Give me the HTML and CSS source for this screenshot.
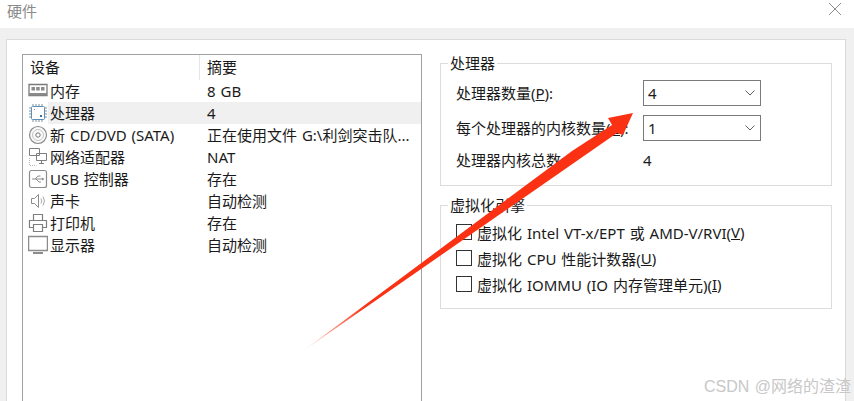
FILE: index.html
```html
<!DOCTYPE html>
<html lang="zh-CN">
<head>
  <meta charset="UTF-8" />
  <title>硬件</title>
  <link rel="stylesheet" href="styles.css">
</head>
<body>

  <header class="titlebar">
    <span class="title">硬件</span>
    <svg class="close" width="14" height="14" viewBox="0 0 14 14"><path d="M1 1L13 13M13 1L1 13" stroke="#8c8c8c" fill="none"/></svg>
  </header>

  <div class="body">
    <div class="panel">

      <div class="list">
        <div class="list-head">
          <div class="col-a">设备</div>
          <div class="col-b">摘要</div>
        </div>

        <div class="row">
          <svg class="ico" viewBox="0 0 20 20"><path d="M1 3.500h18v11H1z" fill="#fff" stroke="#7a7a7a" stroke-width="1.300"/><path d="M1 12h18v2.500H1z" fill="#8a8a8a"/><path d="M3.500 6h3.500v3.500H3.500zM8.200 6h3.500v3.500H8.200zM13 6h3.500v3.500H13z" fill="#8a8a8a"/></svg>
          <div class="name">内存</div>
          <div class="val">8 GB</div>
        </div>

        <div class="row selected">
          <svg class="ico" viewBox="0 0 20 20"><rect x="3.500" y="3.500" width="13" height="13" rx="1" fill="#fff" stroke="#5b8fb5"/><path d="M5 1v2M8 1v2M11 1v2M14 1v2M5 17v2M8 17v2M11 17v2M14 17v2M1 5h2M1 8h2M1 11h2M1 14h2M17 5h2M17 8h2M17 11h2M17 14h2" stroke="#7f8f9c"/><rect x="12" y="12" width="2" height="2" fill="#3f6f96"/><rect x="6" y="6" width="1" height="1" fill="#7f8f9c"/></svg>
          <div class="name">处理器</div>
          <div class="val">4</div>
        </div>

        <div class="row">
          <svg class="ico" viewBox="0 0 20 20"><circle cx="10" cy="10" r="8.500" fill="#fafafa" stroke="#8a8a8a" stroke-width="1.200"/><circle cx="10" cy="10" r="5.500" fill="none" stroke="#c4c4c4"/><circle cx="10" cy="10" r="2.200" fill="#fff" stroke="#777"/></svg>
          <div class="name">新 CD/DVD (SATA)</div>
          <div class="val">正在使用文件 G:\利剑突击队...</div>
        </div>

        <div class="row">
          <svg class="ico" viewBox="0 0 20 20"><path d="M1.500 1.500h10v7h-10zM8.500 6.500h10v7h-10z" fill="#fff" stroke="#7f7f7f"/><path d="M11 16.500h5M13.500 13.500v3" stroke="#7f7f7f"/><path d="M1.500 11v7.500h7" fill="none" stroke="#b5b5b5" stroke-dasharray="1 1"/></svg>
          <div class="name">网络适配器</div>
          <div class="val">NAT</div>
        </div>

        <div class="row">
          <svg class="ico" viewBox="0 0 20 20"><rect x="1.500" y="1.500" width="17" height="17" rx="2" fill="#fff" stroke="#8c8c8c" stroke-width="1.200"/><path d="M4 10h10M7 10l3-3h2.500M8 10l3 3h2" fill="none" stroke="#8c8c8c"/><path d="M14 8.500l2.500 1.500-2.500 1.500z" fill="#8c8c8c"/></svg>
          <div class="name">USB 控制器</div>
          <div class="val">存在</div>
        </div>

        <div class="row">
          <svg class="ico" viewBox="0 0 20 20"><path d="M3.500 7.500h3l4-4v13l-4-4h-3z" fill="#fff" stroke="#8c8c8c"/><path d="M13 7.500q1.500 2.500 0 5M15 5.500q3 4.500 0 9" fill="none" stroke="#a8a8a8"/></svg>
          <div class="name">声卡</div>
          <div class="val">自动检测</div>
        </div>

        <div class="row">
          <svg class="ico" viewBox="0 0 20 20"><path d="M5.500 7V1.500h9V7M5.500 14.500h-4v-7h17v7h-4" fill="#fff" stroke="#7f7f7f" stroke-width="1.200"/><path d="M5.500 11.500h9v7h-9z" fill="#fff" stroke="#7f7f7f" stroke-width="1.200"/></svg>
          <div class="name">打印机</div>
          <div class="val">存在</div>
        </div>

        <div class="row">
          <svg class="ico" viewBox="0 0 20 20"><rect x="0.500" y="1.500" width="19" height="14" fill="#fff" stroke="#8c8c8c" stroke-width="1.500"/><path d="M5 18h10" stroke="#8c8c8c" stroke-width="2"/></svg>
          <div class="name">显示器</div>
          <div class="val">自动检测</div>
        </div>
      </div>

      <div class="side">
        <fieldset class="group group-cpu">
          <legend>处理器</legend>
          <div class="form-row">
            <label>处理器数量(<u>P</u>):</label>
            <div class="combo"><span>4</span><svg width="10" height="6" viewBox="0 0 10 6"><path d="M0.500 0.500L5 5L9.500 0.500" fill="none" stroke="#606060"/></svg></div>
          </div>
          <div class="form-row">
            <label>每个处理器的内核数量(<u>C</u>):</label>
            <div class="combo"><span>1</span><svg width="10" height="6" viewBox="0 0 10 6"><path d="M0.500 0.500L5 5L9.500 0.500" fill="none" stroke="#606060"/></svg></div>
          </div>
          <div class="form-row total">
            <label>处理器内核总数:</label>
            <div class="total-val">4</div>
          </div>
        </fieldset>

        <fieldset class="group group-virt">
          <legend>虚拟化引擎</legend>
          <div class="check"><span class="box"></span>虚拟化 Intel VT-x/EPT 或 AMD-V/RVI(<u>V</u>)</div>
          <div class="check"><span class="box"></span>虚拟化 CPU 性能计数器(<u>U</u>)</div>
          <div class="check"><span class="box"></span>虚拟化 IOMMU (IO 内存管理单元)(<u>I</u>)</div>
        </fieldset>
      </div>

    </div>
  </div>

  <!-- red annotation arrow drawn over the dialog -->
  <svg class="arrow" width="854" height="401" viewBox="0 0 854 401">
    <defs>
      <linearGradient id="fade" gradientUnits="userSpaceOnUse" x1="303" y1="351" x2="365" y2="306">
        <stop offset="0" stop-color="#fa3213" stop-opacity="0.1"/>
        <stop offset="1" stop-color="#fa3213"/>
      </linearGradient>
    </defs>
    <polygon points="303,351 572,151 612,125 608,118 633,113 623,135 617,133" fill="url(#fade)"/>
  </svg>

  <div class="watermark">CSDN @网络的渣渣</div>

</body>
</html>
```

FILE: styles.css
```css
* {
  box-sizing: border-box;
}

html, body {
  height: 100%;
}

body {
  margin: 0;
  width: 854px;
  height: 401px;
  overflow: hidden;
  position: relative;
  background: #fff;
  color: #1a1a1a;
  font-family: "Noto Sans", "Noto Sans CJK SC", sans-serif;
  font-size: 15px;
  word-spacing: 1px;
}

.titlebar {
  height: 28px;
  display: flex;
  justify-content: space-between;
  align-items: center;
  padding: 0 12px 8px 7px;
  background: #fff;
}

.title {
  color: #8a8a8a;
  font-size: 15px;
}

.close {
  margin-top: -2px;
}

.body {
  height: 373px;
  background: #f0f0f0;
  padding: 11px 8px 0 6px;
}

.panel {
  height: 362px;
  display: flex;
  gap: 18px;
  padding: 14px 0 0 15px;
  background: #fff;
  border: 1px solid #dadada;
  border-bottom: none;
  overflow: hidden;
}

/* device list */

.list {
  width: 400px;
  height: 360px;
  flex: none;
  border: 1px solid #a0a0a0;
  border-bottom: none;
}

.list-head {
  height: 25px;
  display: flex;
  align-items: center;
}

.col-a {
  width: 177px;
  padding-left: 7px;
  height: 25px;
  line-height: 25px;
  border-right: 1px solid #e5e5e5;
}

.col-b {
  padding-left: 7px;
  height: 25px;
  line-height: 25px;
}

.row {
  height: 22px;
  display: flex;
  align-items: center;
  padding-left: 5px;
  line-height: 22px;
  white-space: nowrap;
}

.row.selected {
  background: linear-gradient(to right, #fff 25px, #f0f0f0 25px);
}

.ico {
  width: 20px;
  height: 20px;
  flex: none;
  margin-right: 2px;
}

.name {
  width: 157px;
  flex: none;
}

/* right side groups */

.side {
  width: 392px;
  flex: none;
  display: flex;
  flex-direction: column;
  gap: 9px;
  margin-top: -1px;
}

.group {
  margin: 0;
  padding: 0 0 0 15px;
  border: 1px solid #dcdcdc;
}

.group legend {
  padding: 0 2px;
  margin-left: -8px;
  line-height: 20px;
}

.group-cpu {
  height: 133px;
}

.group-virt {
  height: 114px;
}

.form-row {
  display: flex;
  align-items: center;
  height: 25px;
  margin-top: 10px;
  white-space: nowrap;
}

.form-row:first-of-type {
  margin-top: 7px;
}

.form-row label {
  width: 187px;
  flex: none;
}

.combo {
  width: 118px;
  height: 26px;
  display: flex;
  align-items: center;
  justify-content: space-between;
  padding: 0 5px 0 4px;
  border: 1px solid #7a7a7a;
  background: #fff;
}

.form-row.total {
  margin-top: 7px;
}

.check {
  display: flex;
  align-items: center;
  height: 26px;
  white-space: pre;
}

.check:first-of-type {
  margin-top: 4px;
}

.box {
  width: 16px;
  height: 16px;
  flex: none;
  margin-right: 5px;
  background: #fff;
  border: 1px solid #333;
}

/* overlays */

.arrow {
  position: absolute;
  left: 0;
  top: 0;
}

.watermark {
  position: absolute;
  right: 3px;
  top: 377px;
  color: #c8c8c8;
  font-family: "Liberation Sans", "Noto Sans CJK SC", sans-serif;
  font-size: 16px;
  line-height: 20px;
  white-space: nowrap;
}
```
